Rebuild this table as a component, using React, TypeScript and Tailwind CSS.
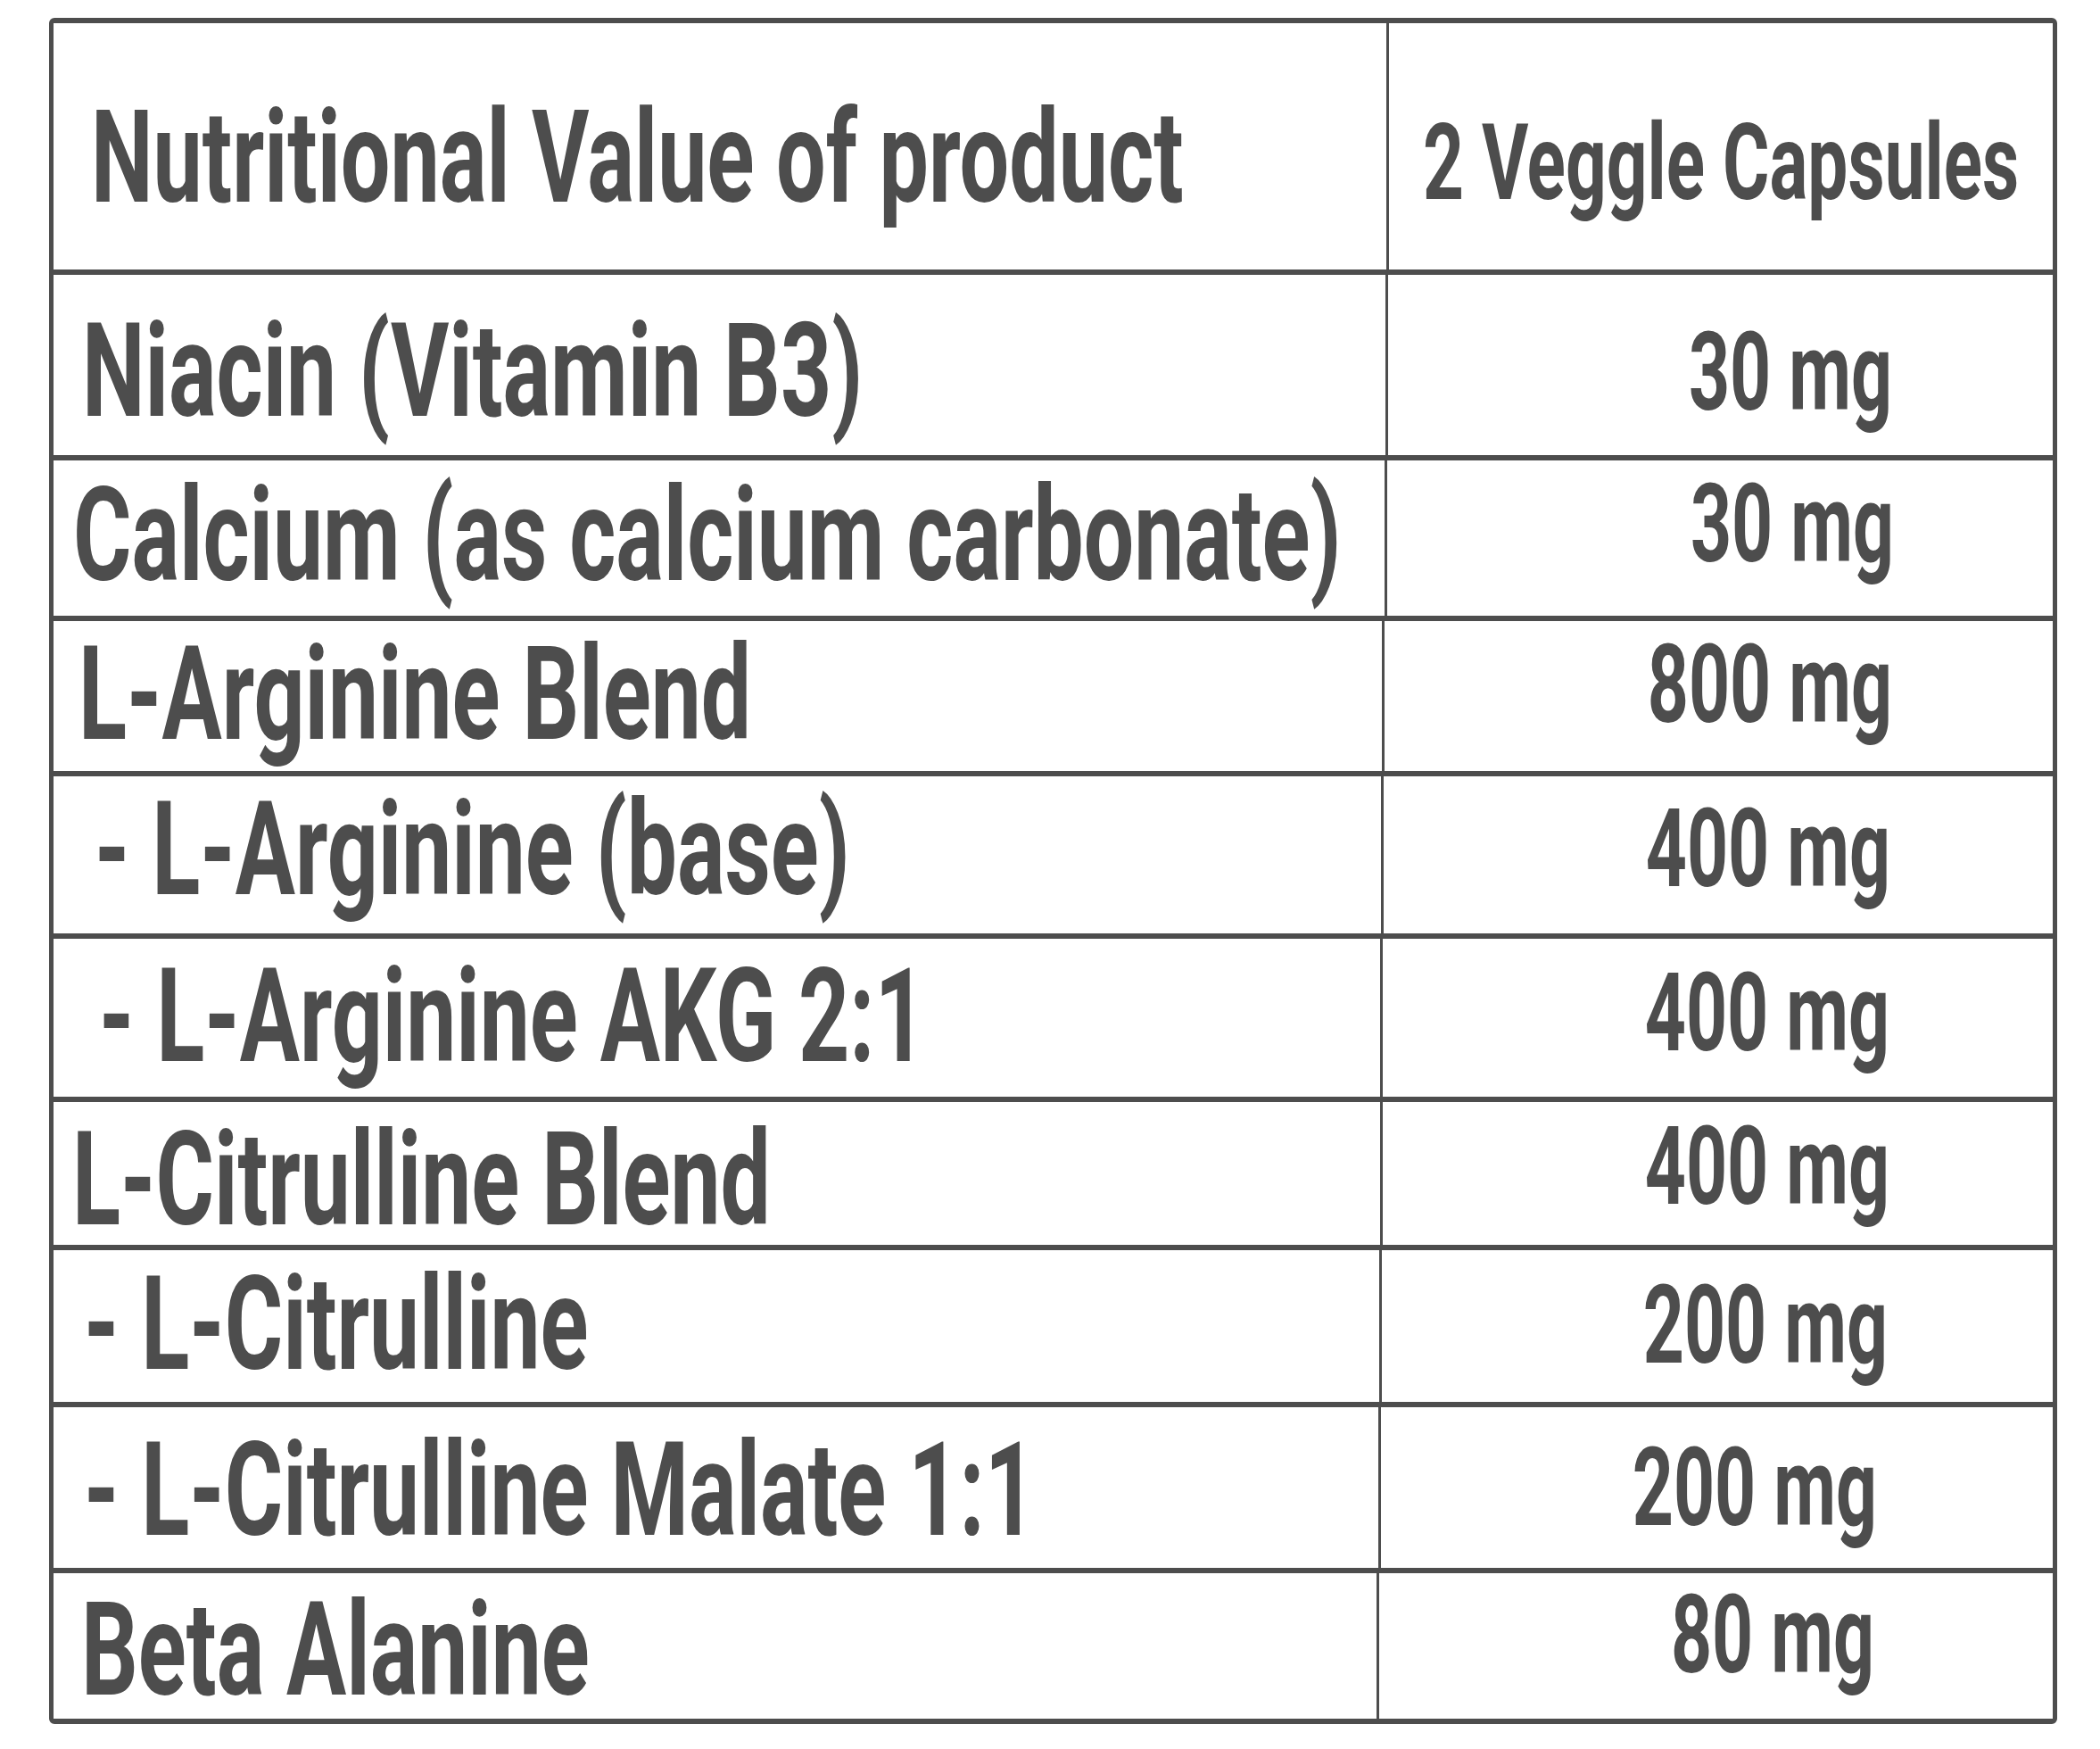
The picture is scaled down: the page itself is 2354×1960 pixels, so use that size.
const rows = [
  { label: "Niacin (Vitamin B3)", value: "30 mg", h: "h-[208px]", cols: "grid-cols-[1496px_1fr]", lp: "pl-[32px]", ly: "pt-[14px]", vp: "pr-[180px]", vy: "pt-[18px]" },
  { label: "Calcium (as calcium carbonate)", value: "30 mg", h: "h-[180px]", cols: "grid-cols-[1495px_1fr]", lp: "pl-[22px]", ly: "pb-[6px]", vp: "pr-[178px]", vy: "pb-[30px]" },
  { label: "L-Arginine Blend", value: "800 mg", h: "h-[174px]", cols: "grid-cols-[1492px_1fr]", lp: "pl-[28px]", ly: "pb-[4px]", vp: "pr-[180px]", vy: "pb-[24px]" },
  { label: "- L-Arginine (base)", value: "400 mg", h: "h-[182px]", cols: "grid-cols-[1491px_1fr]", lp: "pl-[46px]", ly: "pb-[12px]", vp: "pr-[182px]", vy: "pb-[12px]" },
  { label: "- L-Arginine AKG 2:1", value: "400 mg", h: "h-[183px]", cols: "grid-cols-[1490px_1fr]", lp: "pl-[51px]", ly: "pb-[4px]", vp: "pr-[183px]", vy: "pb-[8px]" },
  { label: "L-Citrulline Blend", value: "400 mg", h: "h-[166px]", cols: "grid-cols-[1490px_1fr]", lp: "pl-[21px]", ly: "pt-[14px]", vp: "pr-[183px]", vy: "pb-[14px]" },
  { label: "- L-Citrulline", value: "200 mg", h: "h-[176px]", cols: "grid-cols-[1489px_1fr]", lp: "pl-[34px]", ly: "pb-[4px]", vp: "pr-[185px]", vy: "pb-[0px]" },
  { label: "- L-Citrulline Malate 1:1", value: "200 mg", h: "h-[186px]", cols: "grid-cols-[1488px_1fr]", lp: "pl-[34px]", ly: "pt-[6px]", vp: "pr-[197px]", vy: "pt-[2px]" },
  { label: "Beta Alanine", value: "80 mg", h: "h-[163px]", cols: "grid-cols-[1486px_1fr]", lp: "pl-[31px]", ly: "pt-[8px]", vp: "pr-[200px]", vy: "pb-[22px]" },
];

// Roboto is wider than the condensed face on the label, so the type is set
// small and stretched tall instead of squeezed (keeps the layout box honest).
export default function App() {
  return (
    <div className="min-h-screen bg-white pl-[55px] pt-[20px] font-['Roboto',_'Liberation_Sans',_sans-serif] font-bold text-[#4d4d4d]">
      <div className="w-[2251px] rounded-[6px] border-t-[6px] border-l-[5px] border-r-[5px] border-b-[6px] border-[#4d4d4d]">
        {/* header */}
        <div className="grid h-[282px] grid-cols-[1497px_1fr] border-b-[6px] border-[#4d4d4d]">
          <div className="flex min-w-0 items-center border-r-[3px] border-[#4d4d4d] pl-[42px] pt-[28px]">
            <span className="inline-block scale-y-[1.47] whitespace-nowrap text-[98.6px] leading-none">
              Nutritional Value of product
            </span>
          </div>
          <div className="flex min-w-0 items-center pl-[38px] pt-[38px]">
            <span className="inline-block scale-y-[1.47] whitespace-nowrap text-[80.2px] leading-none">
              2 Veggle Capsules
            </span>
          </div>
        </div>

        {rows.map((row, i) => (
          <div
            key={row.label}
            className={`grid ${row.cols} ${row.h} ${i < rows.length - 1 ? "border-b-[6px]" : ""} border-[#4d4d4d]`}
          >
            <div className={`flex min-w-0 items-center border-r-[3px] border-[#4d4d4d] ${row.lp} ${row.ly}`}>
              <span className="inline-block scale-y-[1.46] whitespace-nowrap text-[100px] leading-none">
                {row.label}
              </span>
            </div>
            <div className={`flex min-w-0 items-center justify-end ${row.vp} ${row.vy}`}>
              <span className="inline-block scale-y-[1.515] whitespace-nowrap text-[80.5px] leading-none">
                {row.value}
              </span>
            </div>
          </div>
        ))}
      </div>
    </div>
  );
}
